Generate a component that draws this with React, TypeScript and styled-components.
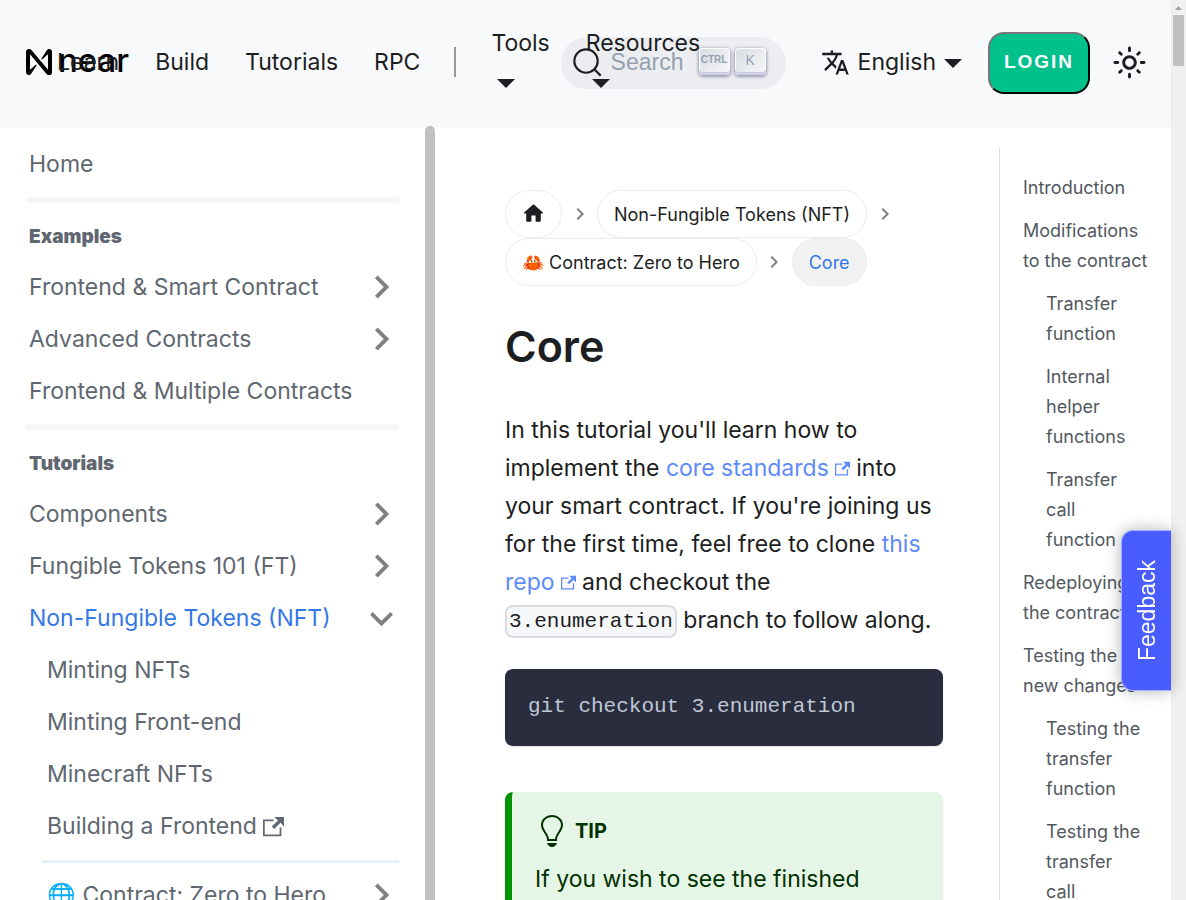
import React from 'react';
import styled, { createGlobalStyle } from 'styled-components';

const GlobalStyle = createGlobalStyle`
  *, *::before, *::after { box-sizing: border-box; }
  body {
    margin: 0;
    font-family: Inter, 'Liberation Sans', sans-serif;
    font-size: 23px;
    line-height: 38px;
    text-rendering: optimizeLegibility;
    color: #1c1e21;
    background: #ffffff;
  }
  a { color: inherit; text-decoration: none; }
  ul { list-style: none; margin: 0; padding: 0; }
  svg { flex: none; }
`;

const Window = styled.div`
  display: grid;
  grid-template-columns: minmax(0, 1fr) 15px;
  grid-template-rows: minmax(0, 1fr);
  height: 100vh;
  overflow: hidden;
`;

const Page = styled.div`
  display: grid;
  grid-template-columns: minmax(0, 1fr);
  grid-template-rows: auto minmax(0, 1fr);
  min-height: 0;
`;

const PageScrollbar = styled.div`
  display: flex;
  flex-direction: column;
  align-items: center;
  gap: 5px;
  padding-top: 6px;
  background: #f0f0f0;
`;

const PageThumb = styled.div`
  width: 11px;
  height: 51px;
  background: #c1c1c1;
`;

/* Header */

const Header = styled.header`
  display: flex;
  align-items: center;
  height: 126px;
  padding: 0 19px 0 26px;
  background: #f8f9fb;
  box-shadow: 0 1px 2px rgba(0, 0, 0, 0.06);
  z-index: 2;
`;

const Brand = styled.a`
  display: flex;
  align-items: center;
  gap: 6px;
  width: 13px;
  flex: none;
  padding-bottom: 2px;
  color: #000000;
  font-size: 33px;
  font-weight: 500;
`;

const Wordmark = styled.span`
  padding-bottom: 4px;
`;

const NavLinks = styled.nav`
  display: flex;
  align-items: center;
  flex: 1 1 0;
  min-width: 0;
  padding-bottom: 2px;
  z-index: 1;
`;

const NavLink = styled.a`
  flex: none;
  padding: 0 18px;
`;

const NavDivider = styled.span`
  flex: none;
  width: 2px;
  height: 30px;
  margin: 0 17px 0 16px;
  background: #999999;
`;

const NavMenu = styled.a`
  display: flex;
  flex-direction: column;
  flex: none;
  padding: 2px 18px 0;
  line-height: 40px;
`;

const Caret = styled.span<{ $stacked?: boolean }>`
  width: 0;
  height: 0;
  margin: ${p => (p.$stacked ? '16px 0 15px 6px' : '2px 0 0')};
  border: solid transparent;
  border-width: 9px 9px 0;
  border-top-color: #1c1e21;
`;

const Tools = styled.div`
  display: flex;
  align-items: center;
  flex: none;
`;

const SearchButton = styled.button`
  display: flex;
  align-items: center;
  height: 52px;
  width: 225px;
  padding: 0 20px 2px 11px;
  border: 0;
  border-radius: 26px;
  background: #ebedf0;
  color: #969faf;
  font: 23px/38px 'Liberation Sans', Arial, sans-serif;
`;

const SearchLabel = styled.span`
  flex: 1;
  padding-left: 8px;
  text-align: left;
`;

const Keys = styled.span`
  display: flex;
  gap: 5px;
  padding-bottom: 2px;
`;

const Key = styled.kbd<{ $small?: boolean }>`
  display: flex;
  align-items: center;
  justify-content: center;
  width: 31px;
  height: 27px;
  padding-bottom: 3px;
  border-radius: 4px;
  background: linear-gradient(-225deg, #d5dbe4, #f8f8f8);
  box-shadow: inset 0 -3px 0 0 #cdcde6, inset 0 0 1px 1px #ffffff,
    0 1px 3px 1px rgba(30, 35, 90, 0.4);
  font: ${p => (p.$small ? 'bold 10px' : '14px')}/20px 'Liberation Sans', Arial, sans-serif;
`;

const Language = styled.a`
  display: flex;
  align-items: center;
  gap: 8px;
  padding: 0 26px 2px 35px;
`;

const LoginButton = styled.button`
  height: 62px;
  width: 102px;
  padding: 0 0 2px;
  border: 2px outset #1c1e21;
  border-color: #767676 #1c1e21 #1c1e21 #767676;
  border-radius: 16px;
  background: #00c08b;
  color: #ffffff;
  font: bold 19px/24px 'Liberation Sans', Arial, sans-serif;
  letter-spacing: 2px;
`;

const ThemeButton = styled.button`
  display: grid;
  place-items: center;
  width: 46px;
  height: 46px;
  margin-left: 16px;
  padding: 0 0 2px;
  border: 0;
  background: none;
  color: inherit;
`;

/* Body */

const Body = styled.div`
  display: grid;
  grid-template-columns: 435px minmax(0, 1fr) 172px;
  grid-template-rows: minmax(0, 1fr);
  min-height: 0;
  overflow: hidden;
`;

const Sidebar = styled.aside`
  display: grid;
  grid-template-columns: minmax(0, 1fr) 10px;
  min-height: 0;
`;

const SidebarThumb = styled.div`
  border-radius: 5px 5px 0 0;
  background: #c1c1c1;
`;

const Menu = styled.ul`
  padding: 12px 26px 0;
  color: #606770;
  white-space: nowrap;
`;

const MenuLink = styled.a<{ $active?: boolean; $nested?: boolean }>`
  display: flex;
  align-items: center;
  justify-content: space-between;
  height: 52px;
  padding-left: ${p => (p.$nested ? '21px' : '3px')};
  padding-right: 6px;
  color: ${p => (p.$active ? '#3578e5' : 'inherit')};
`;

const MenuText = styled.span`
  display: flex;
  align-items: center;
  gap: 6px;
`;

const MenuRule = styled.li<{ $nested?: boolean }>`
  height: ${p => (p.$nested ? '3px' : '6px')};
  margin: ${p => (p.$nested ? '8px 0 6px 16px' : '7px 0 8px')};
  background: ${p => (p.$nested ? '#e6f0fb' : '#f7f7f7')};
`;

const MenuHeading = styled.li`
  padding: 7px 3px 5px;
  font-size: 19px;
  font-weight: 900;
`;

const Article = styled.main`
  min-width: 0;
  padding: 64px 56px 0 70px;
`;

const Breadcrumbs = styled.ul`
  display: flex;
  flex-wrap: wrap;
  font-size: 18px;
  line-height: 31px;
`;

const Crumb = styled.li`
  display: flex;
  align-items: center;
`;

const CrumbPill = styled.a<{ $active?: boolean }>`
  display: flex;
  align-items: center;
  height: 48px;
  padding: 0 16px;
  border: 1px solid #ededed;
  border-radius: 24px;
  background: ${p => (p.$active ? '#f2f2f2' : 'transparent')};
  color: ${p => (p.$active ? '#3578e5' : 'inherit')};
`;

const Separator = styled.span`
  display: flex;
  justify-content: center;
  width: 35px;
`;

const Title = styled.h1`
  margin: 33px 0 38px;
  font-size: 43px;
  font-weight: 600;
  line-height: 54px;
`;

const Paragraph = styled.p`
  margin: 0;
`;

const TextLink = styled.a`
  color: #5f8afa;
  svg { margin-left: 6px; }
`;

const InlineCode = styled.code`
  padding: 3px 2px;
  border: 2px solid #dadde1;
  border-radius: 8px;
  background: #f6f7f8;
  font: 21px/24px 'Liberation Mono', monospace;
  vertical-align: middle;
`;

const CodeBlock = styled.pre`
  margin: 30px 0 46px;
  padding: 22px 23px 24px;
  border-radius: 8px;
  background: #292d3e;
  box-shadow: 0 1px 2px rgba(0, 0, 0, 0.1);
  color: #bfc7d5;
  font: 21px/31px 'Liberation Mono', monospace;
  code { font: inherit; }
`;

const Tip = styled.section`
  padding: 23px;
  border-left: 7px solid #009400;
  border-radius: 8px;
  background: #e6f6e6;
  box-shadow: 0 1px 2px rgba(0, 0, 0, 0.1);
  color: #003100;
`;

const TipHeading = styled.h2`
  display: flex;
  align-items: center;
  gap: 12px;
  margin: 0 0 13px 4px;
  font-size: 20px;
  font-weight: 700;
  line-height: 32px;
`;

const Toc = styled.nav`
  margin-top: 22px;
  padding: 25px 17px 0 23px;
  border-left: 1px solid #dadde1;
  color: #525860;
  font-size: 18px;
  line-height: 30px;
`;

const TocLink = styled.a<{ $nested?: boolean }>`
  display: block;
  margin-bottom: 13px;
  padding: ${p => (p.$nested ? '0 12px 0 23px' : '0')};
`;

const FeedbackTab = styled.button`
  position: fixed;
  top: 530px;
  right: 15px;
  z-index: 3;
  display: flex;
  align-items: center;
  justify-content: center;
  width: 50px;
  height: 161px;
  padding: 0;
  border: 1px solid #a5aeff;
  border-right: 0;
  border-radius: 12px 0 0 12px;
  background: #485cff;
  box-shadow: 0 0 16px rgba(0, 0, 0, 0.3);
  color: #ffffff;
  font: 23px/26px 'Liberation Sans', Arial, sans-serif;
`;

const Vertical = styled.span`
  writing-mode: vertical-rl;
  transform: rotate(180deg);
`;

const NearMark = () => (
  <svg width="26" height="26" viewBox="0 0 90 90" fill="currentColor" aria-hidden="true">
    <path d="M72.2 4.6L53.4 32.5c-1.3 1.9 1.2 4.2 3 2.6L74.9 19c.5-.4 1.2-.1 1.2.6v50.3c0 .7-.9 1-1.3.5l-56-67C17 1.2 14.4 0 11.5 0h-2C4.3 0 0 4.3 0 9.6v70.8C0 85.7 4.3 90 9.6 90c3.3 0 6.4-1.7 8.2-4.6l18.8-27.9c1.3-1.9-1.2-4.2-3-2.6l-18.5 16c-.5.4-1.2.1-1.2-.6V20.1c0-.7.9-1 1.3-.5l56 67c1.8 2.2 4.5 3.4 7.3 3.4h2c5.3 0 9.6-4.3 9.6-9.6V9.6c0-5.3-4.3-9.6-9.6-9.6-3.4 0-6.5 1.7-8.3 4.6z" />
  </svg>
);

const SearchIcon = () => (
  <svg width="31" height="31" viewBox="0 0 20 20" fill="none" stroke="#1c1e21" strokeWidth="1.4" strokeLinecap="round" aria-hidden="true">
    <path d="M14.386 14.386l4.0877 4.0877-4.0877-4.0877c-2.9418 2.9419-7.7115 2.9419-10.6533 0-2.9419-2.9418-2.9419-7.7115 0-10.6533 2.9418-2.9419 7.7115-2.9419 10.6533 0 2.9419 2.9418 2.9419 7.7115 0 10.6533z" />
  </svg>
);

const TranslateIcon = () => (
  <svg width="29" height="29" viewBox="0 0 24 24" fill="currentColor" aria-hidden="true">
    <path d="M12.87 15.07l-2.54-2.51.03-.03c1.74-1.94 2.98-4.17 3.71-6.53H17V4h-7V2H8v2H1v1.99h11.17C11.5 7.92 10.44 9.75 9 11.35 8.07 10.32 7.3 9.19 6.69 8h-2c.73 1.63 1.73 3.17 2.98 4.56l-5.09 5.02L4 19l5-5 3.11 3.11.76-2.04zM18.5 10h-2L12 22h2l1.12-3h4.75L21 22h2l-4.5-12zm-2.62 7l1.62-4.33L19.12 17h-3.24z" />
  </svg>
);

const SunIcon = () => (
  <svg width="35" height="35" viewBox="0 0 24 24" fill="currentColor" aria-hidden="true">
    <path d="M12,9c1.65,0,3,1.35,3,3s-1.35,3-3,3s-3-1.35-3-3S10.35,9,12,9 M12,7c-2.76,0-5,2.24-5,5s2.24,5,5,5s5-2.24,5-5 S14.76,7,12,7L12,7z M2,13l2,0c0.55,0,1-0.45,1-1s-0.45-1-1-1l-2,0c-0.55,0-1,0.45-1,1S1.45,13,2,13z M20,13l2,0c0.55,0,1-0.45,1-1 s-0.45-1-1-1l-2,0c-0.55,0-1,0.45-1,1S19.45,13,20,13z M11,2v2c0,0.55,0.45,1,1,1s1-0.45,1-1V2c0-0.55-0.45-1-1-1S11,1.45,11,2z M11,20v2c0,0.55,0.45,1,1,1s1-0.45,1-1v-2c0-0.55-0.45-1-1-1C11.45,19,11,19.45,11,20z M5.99,4.58c-0.39-0.39-1.03-0.39-1.41,0 c-0.39,0.39-0.39,1.03,0,1.41l1.06,1.06c0.39,0.39,1.03,0.39,1.41,0s0.39-1.03,0-1.41L5.99,4.58z M18.36,16.95 c-0.39-0.39-1.03-0.39-1.41,0c-0.39,0.39-0.39,1.03,0,1.41l1.06,1.06c0.39,0.39,1.03,0.39,1.41,0c0.39-0.39,0.39-1.03,0-1.41 L18.36,16.95z M19.42,5.99c0.39-0.39,0.39-1.03,0-1.41c-0.39-0.39-1.03-0.39-1.41,0l-1.06,1.06c-0.39,0.39-0.39,1.03,0,1.41 s1.03,0.39,1.41,0L19.42,5.99z M7.05,18.36c0.39-0.39,0.39-1.03,0-1.41c-0.39-0.39-1.03-0.39-1.41,0l-1.06,1.06 c-0.39,0.39-0.39,1.03,0,1.41s1.03,0.39,1.41,0L7.05,18.36z" />
  </svg>
);

const HomeIcon = () => (
  <svg width="23" height="25" viewBox="1 1 22 24" fill="currentColor" aria-hidden="true">
    <path d="M10 19v-5h4v5c0 .55.45 1 1 1h3c.55 0 1-.45 1-1v-7h1.7c.46 0 .68-.57.33-.87L12.67 3.6c-.38-.34-.96-.34-1.34 0l-8.36 7.53c-.34.3-.13.87.33.87H5v7c0 .55.45 1 1 1h3c.55 0 1-.45 1-1z" />
  </svg>
);

const Chevron = ({ size, open }: { size: number; open?: boolean }) => (
  <svg width={size} height={size * (open ? 1 : 2)} viewBox={open ? '6 6 12 12' : '6 0 12 24'} fill="#808080" aria-hidden="true">
    <path d={open ? 'M7.41 8.59L12 13.17l4.59-4.58L18 10l-6 6-6-6z' : 'M8.59 16.59L13.17 12 8.59 7.41 10 6l6 6-6 6z'} />
  </svg>
);

const ExternalIcon = ({ size }: { size: number }) => (
  <svg width={size} height={size} viewBox="0 0 24 24" fill="currentColor" aria-hidden="true">
    <path d="M21 13v10h-21v-19h12v2h-10v15h17v-8h2zm3-12h-10.988l4.035 4-6.977 7.07 2.828 2.828 6.977-7.07 4.125 4.172v-11z" />
  </svg>
);

const BulbIcon = () => (
  <svg width="24" height="32" viewBox="0 0 12 16" fill="currentColor" aria-hidden="true">
    <path d="M6.5 0C3.48 0 1 2.19 1 5c0 .92.55 2.25 1 3 1.34 2.25 1.78 2.78 2 4v1h5v-1c.22-1.22.66-1.75 2-4 .45-.75 1-2.08 1-3 0-2.81-2.48-5-5.5-5zm3.64 7.48c-.25.44-.47.8-.67 1.11-.86 1.41-1.25 2.06-1.45 3.23-.02.05-.02.11-.02.17H5c0-.06 0-.13-.02-.17-.2-1.17-.59-1.83-1.45-3.23-.2-.31-.42-.67-.67-1.11C2.44 6.78 2 5.65 2 5c0-2.2 2.02-4 4.5-4 1.22 0 2.36.42 3.22 1.19C10.55 2.94 11 3.94 11 5c0 .66-.44 1.78-.86 2.48zM4 14h5c-.23 1.14-1.3 2-2.5 2s-2.27-.86-2.5-2z" />
  </svg>
);

type Entry = {
  label?: string;
  kind?: 'rule' | 'heading';
  arrow?: 'closed' | 'open';
  active?: boolean;
  nested?: boolean;
  external?: boolean;
};

const menu: Entry[] = [
  { label: 'Home' },
  { kind: 'rule' },
  { kind: 'heading', label: 'Examples' },
  { label: 'Frontend & Smart Contract', arrow: 'closed' },
  { label: 'Advanced Contracts', arrow: 'closed' },
  { label: 'Frontend & Multiple Contracts' },
  { kind: 'rule' },
  { kind: 'heading', label: 'Tutorials' },
  { label: 'Components', arrow: 'closed' },
  { label: 'Fungible Tokens 101 (FT)', arrow: 'closed' },
  { label: 'Non-Fungible Tokens (NFT)', arrow: 'open', active: true },
  { label: 'Minting NFTs', nested: true },
  { label: 'Minting Front-end', nested: true },
  { label: 'Minecraft NFTs', nested: true },
  { label: 'Building a Frontend', nested: true, external: true },
  { kind: 'rule', nested: true },
  { label: '🌐 Contract: Zero to Hero', nested: true, arrow: 'closed' },
];

const toc: { label: string; nested?: boolean }[] = [
  { label: 'Introduction' },
  { label: 'Modifications to the contract' },
  { label: 'Transfer function', nested: true },
  { label: 'Internal helper functions', nested: true },
  { label: 'Transfer call function', nested: true },
  { label: 'Redeploying the contract' },
  { label: 'Testing the new changes' },
  { label: 'Testing the transfer function', nested: true },
  { label: 'Testing the transfer call function', nested: true },
];

const MenuEntry = ({ entry }: { entry: Entry }) => {
  if (entry.kind === 'rule') return <MenuRule $nested={entry.nested} />;
  if (entry.kind === 'heading') return <MenuHeading>{entry.label}</MenuHeading>;
  return (
    <li>
      <MenuLink href="#" $active={entry.active} $nested={entry.nested}>
        <MenuText>
          {entry.label}
          {entry.external && <ExternalIcon size={21} />}
        </MenuText>
        {entry.arrow && <Chevron size={23} open={entry.arrow === 'open'} />}
      </MenuLink>
    </li>
  );
};

const CrumbSeparator = () => (
  <Separator>
    <Chevron size={12} />
  </Separator>
);

export default function App() {
  return (
    <>
      <GlobalStyle />
      <Window>
        <Page>
          <Header>
            <Brand href="#"><NearMark /><Wordmark>near</Wordmark></Brand>
            <NavLinks>
              <NavLink href="#">Learn</NavLink>
              <NavLink href="#">Build</NavLink>
              <NavLink href="#">Tutorials</NavLink>
              <NavLink href="#">RPC</NavLink>
              <NavDivider />
              <NavMenu href="#">Tools<Caret $stacked /></NavMenu>
              <NavMenu href="#">Resources<Caret $stacked /></NavMenu>
            </NavLinks>
            <Tools>
              <SearchButton type="button">
                <SearchIcon />
                <SearchLabel>Search</SearchLabel>
                <Keys><Key $small>CTRL</Key><Key>K</Key></Keys>
              </SearchButton>
              <Language href="#"><TranslateIcon />English<Caret /></Language>
              <LoginButton type="button">LOGIN</LoginButton>
              <ThemeButton type="button" aria-label="Switch theme"><SunIcon /></ThemeButton>
            </Tools>
          </Header>
          <Body>
            <Sidebar>
              <Menu>
                {menu.map((entry, i) => <MenuEntry key={i} entry={entry} />)}
              </Menu>
              <SidebarThumb />
            </Sidebar>
            <Article>
              <Breadcrumbs>
                <Crumb><CrumbPill href="#" aria-label="Home page"><HomeIcon /></CrumbPill><CrumbSeparator /></Crumb>
                <Crumb><CrumbPill href="#">Non-Fungible Tokens (NFT)</CrumbPill><CrumbSeparator /></Crumb>
                <Crumb><CrumbPill href="#">🦀 Contract: Zero to Hero</CrumbPill><CrumbSeparator /></Crumb>
                <Crumb><CrumbPill href="#" $active>Core</CrumbPill></Crumb>
              </Breadcrumbs>
              <Title>Core</Title>
              <Paragraph>
                In this tutorial you'll learn how to implement the{' '}
                <TextLink href="#">core standards<ExternalIcon size={15} /></TextLink> into your smart
                contract. If you're joining us for the first time, feel free to clone{' '}
                <TextLink href="#">this repo<ExternalIcon size={15} /></TextLink> and checkout the{' '}
                <InlineCode>3.enumeration</InlineCode> branch to follow along.
              </Paragraph>
              <CodeBlock><code>git checkout 3.enumeration</code></CodeBlock>
              <Tip>
                <TipHeading><BulbIcon />TIP</TipHeading>
                <Paragraph>If you wish to see the finished</Paragraph>
              </Tip>
            </Article>
            <Toc>
              <ul>
                {toc.map((item, i) => (
                  <li key={i}><TocLink href="#" $nested={item.nested}>{item.label}</TocLink></li>
                ))}
              </ul>
            </Toc>
          </Body>
        </Page>
        <PageScrollbar>
          <svg width="7" height="4" viewBox="0 0 7 4" fill="#a0a0a0" aria-hidden="true"><path d="M0 4L3.500 0L7 4z" /></svg>
          <PageThumb />
        </PageScrollbar>
      </Window>
      <FeedbackTab type="button"><Vertical>Feedback</Vertical></FeedbackTab>
    </>
  );
}
